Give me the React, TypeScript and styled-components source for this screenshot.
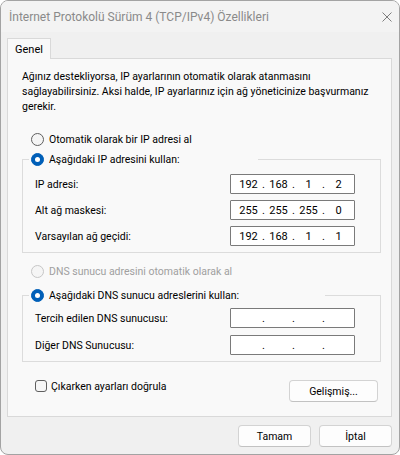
import styled, { createGlobalStyle } from "styled-components";

const GlobalStyle = createGlobalStyle`
  html, body {
    margin: 0;
    padding: 0;
    background: #ffffff;
  }
  body {
    font-family: Roboto, "Noto Sans", "Liberation Sans", sans-serif;
    font-size: 10.5px;
    color: #000000;
  }
  * {
    box-sizing: border-box;
  }
`;

const Window = styled.div`
  width: 400px;
  height: 455px;
  border: 1px solid #a3a3a3;
  border-radius: 8px;
  background: #f0f0f0;
  display: flex;
  flex-direction: column;
  overflow: hidden;
`;

const TitleBar = styled.div`
  height: 31px;
  flex: none;
  display: flex;
  align-items: center;
  justify-content: space-between;
  padding: 0 7px 0 8px;
  background: #f3f3f3;
  color: #8a8a8a;
  font-size: 12px;
`;

const Body = styled.div`
  flex: 1;
  display: flex;
  flex-direction: column;
  padding: 6px 7px 0 6px;
`;

const TabStrip = styled.div`
  display: flex;
`;

const Tab = styled.div`
  height: 21px;
  margin-bottom: -1px;
  padding: 0 7px;
  display: flex;
  align-items: center;
  border: 1px solid #d9d9d9;
  border-bottom: none;
  background: #f9f9f9;
  font-size: 11px;
  position: relative;
  z-index: 1;
`;

const Panel = styled.div`
  height: 359px;
  border: 1px solid #d9d9d9;
  background: #f9f9f9;
  display: flex;
  flex-direction: column;
  padding: 10px 10px 0 14px;
`;

const Description = styled.p`
  margin: 0;
  line-height: 15px;
  white-space: nowrap;
`;

const OptionRow = styled.label<{ $disabled?: boolean }>`
  height: 17px;
  display: flex;
  align-items: center;
  gap: 5px;
  color: ${(p) => (p.$disabled ? "#a0a0a0" : "#000000")};
  margin-left: 9px;
`;

const Radio = styled.span<{ $checked?: boolean; $disabled?: boolean }>`
  width: 13px;
  height: 13px;
  flex: none;
  border-radius: 50%;
  border: 1px solid
    ${(p) => (p.$checked ? "#005fb8" : p.$disabled ? "#c6c6c6" : "#5f5f5f")};
  background: ${(p) => (p.$checked ? "#005fb8" : "#f5f5f5")};
  display: flex;
  align-items: center;
  justify-content: center;

  &::after {
    content: "";
    display: ${(p) => (p.$checked ? "block" : "none")};
    width: 5px;
    height: 5px;
    border-radius: 50%;
    background: #ffffff;
  }
`;

const Group = styled.fieldset<{ $top: number }>`
  margin: ${(p) => p.$top}px 0 0 0;
  padding: 0 25px 6px 12px;
  border: 1px solid #dcdcdc;
  min-width: 0;
`;

const Legend = styled.legend<{ $w: number }>`
  width: ${(p) => p.$w}px;
  padding: 0 0 0 2px;
  margin-left: -6px;
`;

const LegendRow = styled(OptionRow)`
  margin-left: 0;
`;

const Rows = styled.div<{ $gap: number; $top: number }>`
  display: flex;
  flex-direction: column;
  gap: ${(p) => p.$gap}px;
  padding-top: ${(p) => p.$top}px;
`;

const FieldRow = styled.div`
  height: 20px;
  display: flex;
  align-items: center;
  justify-content: space-between;
`;

const IpBox = styled.div`
  width: 125px;
  height: 20px;
  border: 1px solid #7a7a7a;
  border-radius: 1px;
  background: #ffffff;
  display: flex;
  align-items: center;
  padding-left: 4.5px;
  font-size: 11px;
`;

const Segment = styled.span`
  width: 26px;
  text-align: center;
`;

const Dot = styled.span`
  width: 4px;
  text-align: center;
`;

const Spacer = styled.div<{ $h: number }>`
  height: ${(p) => p.$h}px;
  flex: none;
`;

const BottomRow = styled.div`
  margin-top: 18px;
  display: flex;
  align-items: flex-start;
  justify-content: space-between;
  padding: 0 3px 0 13px;
`;

const CheckLabel = styled.label`
  height: 12px;
  display: flex;
  align-items: center;
  gap: 4px;
`;

const Checkbox = styled.span`
  width: 12px;
  height: 12px;
  flex: none;
  border: 1px solid #5f5f5f;
  border-radius: 3px;
  background: #f6f6f6;
`;

const Button = styled.button<{ $w: number }>`
  width: ${(p) => p.$w}px;
  height: 22px;
  padding: 0;
  border: 1px solid #d3d3d3;
  border-bottom-color: #c2c2c2;
  border-radius: 4px;
  background: #fdfdfd;
  font-family: inherit;
  font-size: 10.5px;
  color: #000000;
`;

const Footer = styled.div`
  display: flex;
  justify-content: flex-end;
  gap: 8px;
  padding-top: 8px;
`;

const IpField = ({ value }: { value?: string[] }) => {
  const parts = value ?? ["", "", "", ""];
  return (
    <IpBox>
      {parts.map((part, i) => (
        <>
          <Segment key={`s${i}`}>{part}</Segment>
          {i < 3 && <Dot key={`d${i}`}>.</Dot>}
        </>
      ))}
    </IpBox>
  );
};

const CloseIcon = () => (
  <svg width="10" height="10" viewBox="0 0 10 10">
    <path d="M0.5 0.5 L9.5 9.5 M9.5 0.5 L0.5 9.5" stroke="#7d7d7d" strokeWidth="1" />
  </svg>
);

export default function App() {
  return (
    <>
      <GlobalStyle />
      <Window>
        <TitleBar>
          <span>İnternet Protokolü Sürüm 4 (TCP/IPv4) Özellikleri</span>
          <CloseIcon />
        </TitleBar>
        <Body>
          <TabStrip>
            <Tab>Genel</Tab>
          </TabStrip>
          <Panel>
            <Description>
              Ağınız destekliyorsa, IP ayarlarının otomatik olarak atanmasını
              <br />
              sağlayabilirsiniz. Aksi halde, IP ayarlarınız için ağ yöneticinize başvurmanız
              <br />
              gerekir.
            </Description>
            <Spacer $h={17} />
            <OptionRow>
              <Radio />
              Otomatik olarak bir IP adresi al
            </OptionRow>
            <Group $top={3}>
              <Legend $w={229}>
                <LegendRow>
                  <Radio $checked />
                  Aşağıdaki IP adresini kullan:
                </LegendRow>
              </Legend>
              <Rows $gap={6} $top={6}>
                <FieldRow>
                  IP adresi:
                  <IpField value={["192", "168", "1", "2"]} />
                </FieldRow>
                <FieldRow>
                  Alt ağ maskesi:
                  <IpField value={["255", "255", "255", "0"]} />
                </FieldRow>
                <FieldRow>
                  Varsayılan ağ geçidi:
                  <IpField value={["192", "168", "1", "1"]} />
                </FieldRow>
              </Rows>
            </Group>
            <Spacer $h={10} />
            <OptionRow $disabled>
              <Radio $disabled />
              DNS sunucu adresini otomatik olarak al
            </OptionRow>
            <Group $top={7}>
              <Legend $w={296}>
                <LegendRow>
                  <Radio $checked />
                  Aşağıdaki DNS sunucu adreslerini kullan:
                </LegendRow>
              </Legend>
              <Rows $gap={7} $top={4}>
                <FieldRow>
                  Tercih edilen DNS sunucusu:
                  <IpField />
                </FieldRow>
                <FieldRow>
                  Diğer DNS Sunucusu:
                  <IpField />
                </FieldRow>
              </Rows>
            </Group>
            <BottomRow>
              <CheckLabel>
                <Checkbox />
                Çıkarken ayarları doğrula
              </CheckLabel>
              <Button $w={89}>Gelişmiş...</Button>
            </BottomRow>
          </Panel>
          <Footer>
            <Button $w={73}>Tamam</Button>
            <Button $w={73}>İptal</Button>
          </Footer>
        </Body>
      </Window>
    </>
  );
}
